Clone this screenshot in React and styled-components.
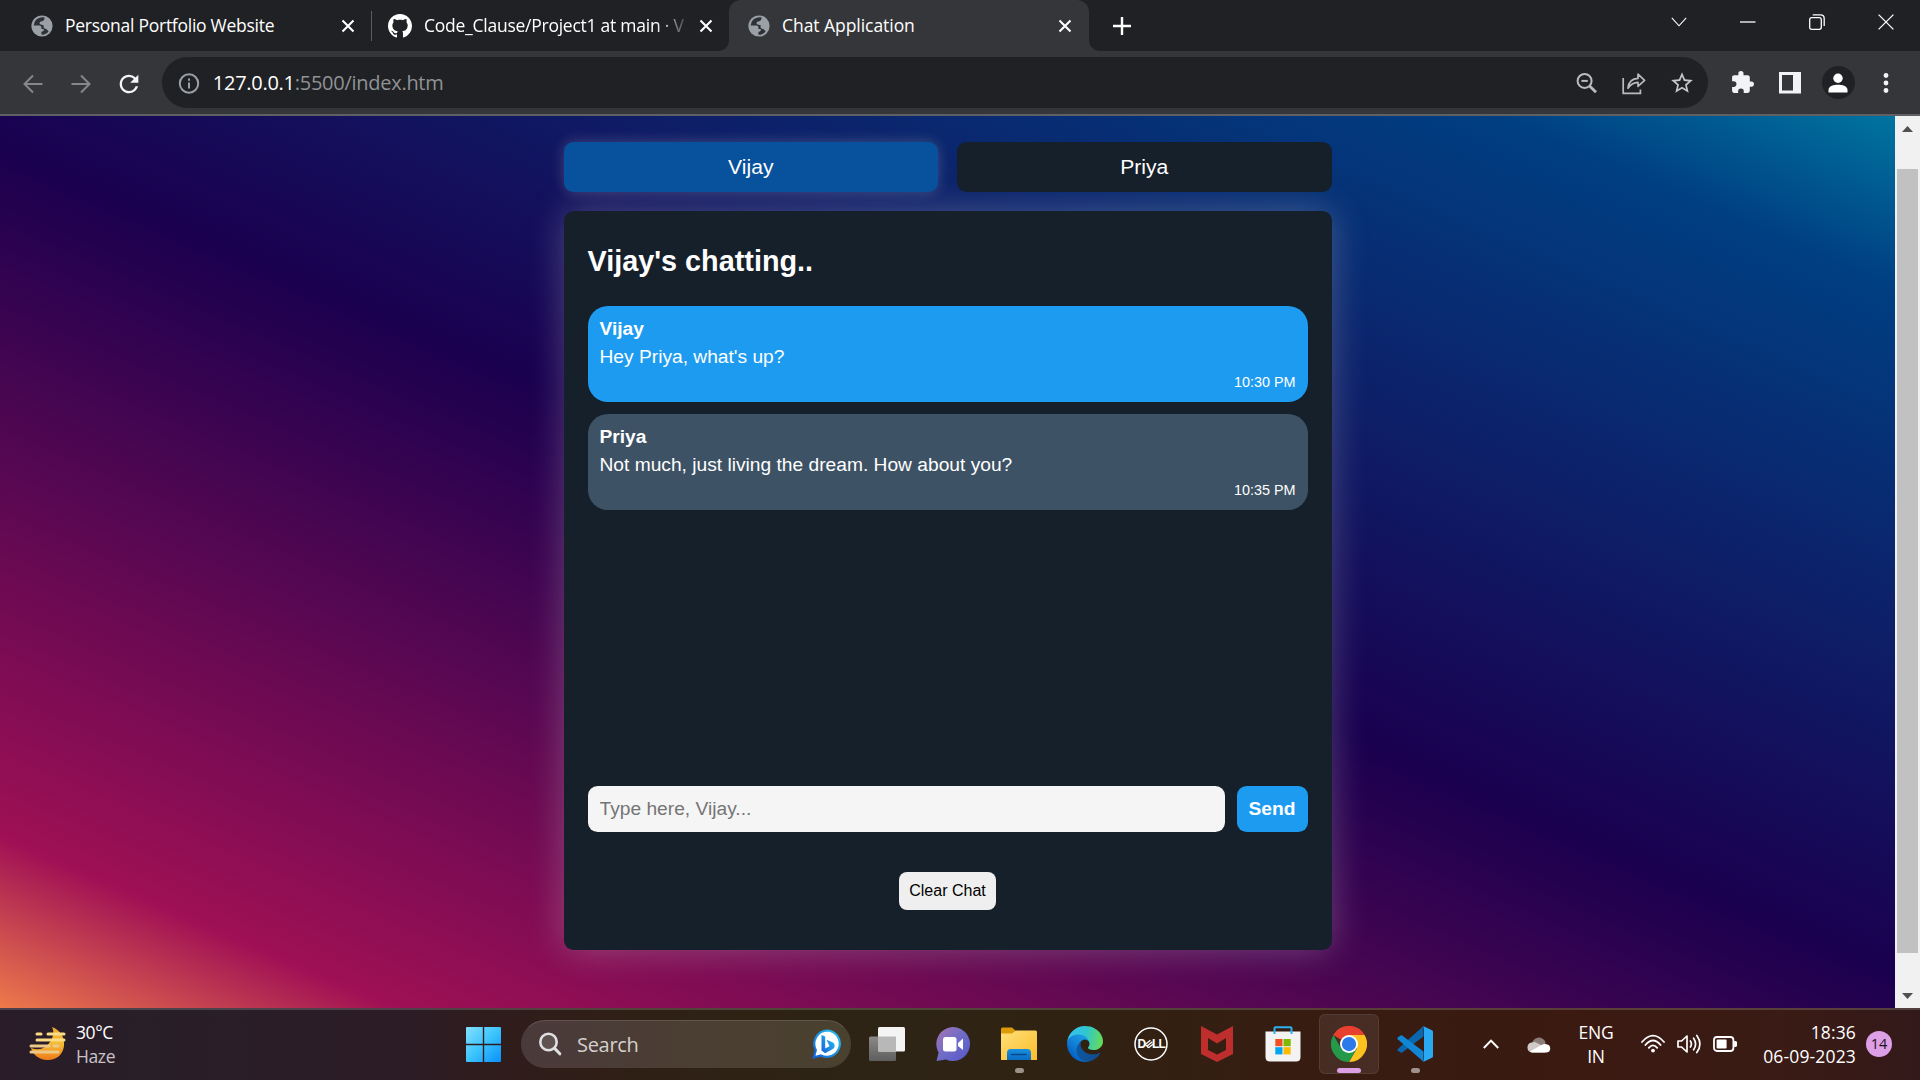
import React from "react";
import styled, { createGlobalStyle } from "styled-components";

const GlobalStyle = createGlobalStyle`
  * { box-sizing: border-box; }
  body { margin: 0; background: #202124; overflow: hidden; }
`;

const ui = `"Open Sans", "Noto Sans", sans-serif`;
const arial = `"Liberation Sans", Arial, sans-serif`;

const Screen = styled.div`
  width: 1920px;
  height: 1080px;
  display: flex;
  flex-direction: column;
  overflow: hidden;
  font-family: ${ui};
`;

/* ---------- browser chrome ---------- */
const TabStrip = styled.div`
  height: 51px;
  background: #202124;
  display: flex;
  align-items: center;
`;
const Tab = styled.div`
  position: relative;
  width: ${(p) => p.$w}px;
  height: 51px;
  padding: 0 ${(p) => p.$pr}px 0 ${(p) => p.$pl}px;
  display: flex;
  align-items: center;
  gap: 12px;
  color: #fff;
  background: ${(p) => (p.$active ? "#35363a" : "transparent")};
  border-radius: 12px 12px 0 0;
  &::before,
  &::after {
    content: "";
    display: ${(p) => (p.$active ? "block" : "none")};
    position: absolute;
    bottom: 0;
    width: 10px;
    height: 10px;
  }
  &::before {
    left: -10px;
    background: radial-gradient(circle at 0 0, transparent 9.5px, #35363a 10px);
  }
  &::after {
    right: -10px;
    background: radial-gradient(circle at 100% 0, transparent 9.5px, #35363a 10px);
  }
`;
const TabTitle = styled.span`
  flex: 1;
  min-width: 0;
  padding-bottom: 1px;
  white-space: nowrap;
  font-size: 17.5px;
  line-height: 26px;
  letter-spacing: ${(p) => p.$ls}px;
  ${(p) =>
    p.$fade &&
    "-webkit-mask-image: linear-gradient(90deg, #000 88%, transparent 102%); mask-image: linear-gradient(90deg, #000 88%, transparent 102%);"}
`;
const TabDivider = styled.div`
  width: 1px;
  height: 30px;
  background: #5a5b5f;
`;
const NewTab = styled.div`
  width: 66px;
  display: flex;
  justify-content: center;
`;
const WindowButtons = styled.div`
  margin-left: auto;
  display: flex;
  height: 43px;
  align-self: flex-start;
`;
const WindowButton = styled.div`
  width: 69px;
  display: flex;
  align-items: center;
  justify-content: center;
`;
const Toolbar = styled.div`
  height: 65px;
  background: #35363a;
  border-bottom: 2px solid #5f6063;
  display: flex;
  align-items: center;
`;
const NavButtons = styled.div`
  width: 162px;
  padding: 2px 0 0 21px;
  display: flex;
  align-items: center;
  gap: 24px;
`;
const Omnibox = styled.div`
  width: 1548px;
  height: 51px;
  border-radius: 26px;
  background: #202124;
  display: flex;
  align-items: center;
  padding: 0 13px 0 16px;
`;
const Url = styled.span`
  margin-left: 13px;
  flex: 1;
  font-size: 20px;
  letter-spacing: -0.27px;
  color: #8f9296;
  b {
    font-weight: 400;
    color: #fff;
  }
`;
const OmniActions = styled.div`
  display: flex;
  align-items: center;
  gap: 23px;
`;
const ToolbarActions = styled.div`
  flex: 1;
  display: flex;
  align-items: center;
  padding-left: 21px;
`;
const ActionSlot = styled.div`
  width: ${(p) => p.$w}px;
  display: flex;
  flex-shrink: 0;
  justify-content: center;
`;
const Avatar = styled.div`
  width: 33px;
  height: 33px;
  flex-shrink: 0;
  border-radius: 50%;
  background: #202124;
  display: flex;
  align-items: center;
  justify-content: center;
`;

/* ---------- page ---------- */
const Viewport = styled.div`
  height: 892px;
  display: flex;
`;
const Page = styled.main`
  width: 1895px;
  padding-top: 26px;
  display: flex;
  flex-direction: column;
  align-items: center;
  font-family: ${arial};
  background: linear-gradient(23.5deg, #ee7a4b 0%, #9f1055 10%, #1a004f 50%, #003f82 90%, #0074a0 100%);
`;
const Column = styled.div`
  width: 768px;
`;
const PersonSelector = styled.div`
  position: relative;
  z-index: 1;
  display: grid;
  grid-template-columns: 1fr 1fr;
  gap: 19px;
  margin-bottom: 19px;
`;
const PersonButton = styled.button`
  height: 50px;
  border: 0;
  border-radius: 9.6px;
  font: 21.12px/24px ${arial};
  color: #fff;
  background: ${(p) => (p.$active ? "#08529d" : "#16202a")};
  box-shadow: ${(p) => (p.$active ? "0 0 14px rgba(225, 225, 225, 0.24)" : "none")};
`;
const ChatPanel = styled.section`
  height: 739px;
  padding: 33px 24px 0;
  border-radius: 9.6px;
  background: #16202a;
  box-shadow: 0 0 36px rgba(225, 225, 225, 0.28);
  color: #fff;
  display: flex;
  flex-direction: column;
`;
const ChatTitle = styled.h2`
  margin: 0;
  height: 62px;
  font-size: 28.8px;
  line-height: 34px;
`;
const Messages = styled.div`
  height: 480px;
  display: flex;
  flex-direction: column;
  gap: 12px;
`;
const Bubble = styled.article`
  height: 96px;
  padding: 9px 12px;
  border-radius: 20px;
  background: ${(p) => (p.$own ? "#1d9bf0" : "#3e5265")};
  display: flex;
  flex-direction: column;
`;
const Sender = styled.strong`
  font-size: 19.2px;
  line-height: 28px;
`;
const Body = styled.span`
  font-size: 19.2px;
  line-height: 28px;
`;
const Time = styled.time`
  align-self: flex-end;
  font-size: 14.4px;
  line-height: 23px;
`;
const Composer = styled.form`
  display: flex;
  gap: 12px;
`;
const Input = styled.input`
  flex: 1;
  min-width: 0;
  height: 46px;
  padding: 0 12px;
  border: 0;
  border-radius: 9.6px;
  background: #f5f5f5;
  font: 19.2px ${arial};
  &::placeholder {
    color: #757575;
  }
`;
const Send = styled.button`
  width: 71px;
  height: 46px;
  padding: 0;
  border: 0;
  border-radius: 9.6px;
  background: #1d9bf0;
  color: #fff;
  font: bold 19.2px ${arial};
`;
const Clear = styled.button`
  align-self: center;
  margin-top: 40px;
  width: 97px;
  height: 38px;
  padding: 0;
  border: 0;
  border-radius: 8px;
  background: #efefef;
  color: #000;
  font: 16px ${arial};
`;
const Scrollbar = styled.div`
  width: 25px;
  background: #f1f1f1;
  display: flex;
  flex-direction: column;
  align-items: center;
  justify-content: space-between;
  padding: 10px 0 9px;
`;
const Thumb = styled.div`
  width: 21px;
  height: 784px;
  margin-bottom: 24px;
  margin-top: 20px;
  background: #c1c1c1;
`;

/* ---------- taskbar ---------- */
const Taskbar = styled.footer`
  height: 72px;
  padding-bottom: 2px;
  border-top: 2px solid rgba(255, 255, 255, 0.16);
  background: linear-gradient(90deg, #291c28 0, #291f28 140px, #2c1c26 400px, #2f1c1c 500px, #2f2015 640px, #2d2415 860px, #302213 1080px, #371c12 1300px, #3a1a11 1560px, #3a1b15 1780px, #33191a 1920px) border-box;
  display: flex;
  align-items: center;
  color: #fff;
`;
const Weather = styled.div`
  width: 466px;
  padding-left: 29px;
  display: flex;
  align-items: center;
  gap: 10px;
`;
const Lines = styled.div`
  display: flex;
  flex-direction: column;
  align-items: ${(p) => p.$align || "flex-start"};
  font-size: 17.5px;
  line-height: 24px;
  letter-spacing: ${(p) => p.$ls || 0}px;
  white-space: nowrap;
`;
const Muted = styled.span`
  color: #c9c3c8;
`;
const SearchBox = styled.div`
  width: 330px;
  height: 48px;
  margin: 0 3px 0 20px;
  padding: 0 8px 0 16px;
  border: 1.5px solid rgba(255, 255, 255, 0.14);
  border-top-color: rgba(255, 255, 255, 0.24);
  border-radius: 24px;
  background: linear-gradient(90deg, #4a3a3b, #4b3e33 50%, #4a412f);
  background-clip: padding-box;
  display: flex;
  align-items: center;
`;
const SearchText = styled.span`
  flex: 1;
  margin-left: 15px;
  font-size: 20px;
  letter-spacing: -0.3px;
  color: #d5d0ce;
`;
const App66 = styled.div`
  position: relative;
  width: 66px;
  height: 68px;
  display: flex;
  align-items: center;
  justify-content: center;
`;
const ActiveTile = styled.div`
  width: 60px;
  height: 60px;
  border-radius: 6px;
  background: rgba(255, 255, 255, 0.08);
  border: 1px solid rgba(255, 255, 255, 0.08);
  display: flex;
  align-items: center;
  justify-content: center;
`;
const Indicator = styled.div`
  position: absolute;
  top: 58px;
  left: calc(50% - ${(p) => p.$w / 2}px);
  width: ${(p) => p.$w}px;
  height: 5px;
  border-radius: 3px;
  background: ${(p) => p.$c};
`;
const Tray = styled.div`
  flex: 1;
  display: flex;
  align-items: center;
  padding-left: 35px;
`;
const TrayIcons = styled.div`
  display: flex;
  gap: 12px;
  margin-left: 28px;
`;
const Clock = styled.div`
  flex: 1;
  display: flex;
  justify-content: flex-end;
`;
const Badge = styled.div`
  width: 26px;
  height: 26px;
  margin: 0 28px 0 10px;
  border-radius: 50%;
  background: #dd9fe5;
  color: #1d1220;
  font-size: 14.5px;
  line-height: 25px;
  text-align: center;
`;

/* ---------- icons ---------- */
const Globe = () => (
  <svg width="22" height="22" viewBox="0 0 22 22">
    <circle cx="11" cy="11" r="10.6" fill="#9aa0a6" />
    <path d="M13.6 2.6 C11 1.8 6 3 3.8 6.6 L2.6 10.6 L8.5 10.6 C10.5 10.8 10.6 12.4 10.4 14 L12.6 14 C13.4 15.8 12 16.6 10.4 16.8 L10.4 19.6 C13 20 16 18.6 17.6 16.8 C16.8 14.8 15 13.6 13.6 13.4 C12.2 13 12.4 11.4 13 10.6 L9 9.2 C8 8 8.8 6.8 10 6.6 C12 6.6 13.6 5.4 13.6 2.6 Z" fill="#303134" />
  </svg>
);
const Github = () => (
  <svg width="24" height="24" viewBox="0 0 16 16" fill="#fff">
    <path d="M8 0C3.58 0 0 3.58 0 8c0 3.54 2.29 6.53 5.47 7.59.4.07.55-.17.55-.38 0-.19-.01-.82-.01-1.49-2.01.37-2.53-.49-2.69-.94-.09-.23-.48-.94-.82-1.13-.28-.15-.68-.52-.01-.53.63-.01 1.08.58 1.23.82.72 1.21 1.87.87 2.33.66.07-.52.28-.87.51-1.07-1.78-.2-3.64-.89-3.64-3.95 0-.87.31-1.59.82-2.15-.08-.2-.36-1.02.08-2.12 0 0 .67-.21 2.2.82.64-.18 1.32-.27 2-.27s1.36.09 2 .27c1.53-1.04 2.2-.82 2.2-.82.44 1.1.16 1.92.08 2.12.51.56.82 1.27.82 2.15 0 3.07-1.87 3.75-3.65 3.95.29.25.54.73.54 1.48 0 1.07-.01 1.93-.01 2.2 0 .21.15.46.55.38A8.01 8.01 0 0 0 16 8c0-4.42-3.58-8-8-8z" />
  </svg>
);
const CloseX = () => (
  <svg width="14" height="14" viewBox="0 0 14 14" stroke="#fff" strokeWidth="2.1">
    <path d="M1.5 1.5 L12.5 12.5 M12.5 1.5 L1.5 12.5" />
  </svg>
);
const Plus = () => (
  <svg width="18" height="18" viewBox="0 0 18 18" stroke="#fff" strokeWidth="2.4">
    <path d="M9 0 V18 M0 9 H18" />
  </svg>
);
const Arrow = ({ flip }) => (
  <svg width="24" height="24" viewBox="0 0 24 24" fill="none" stroke="#86878b" strokeWidth="2" transform={flip ? "scale(-1 1)" : undefined}>
    <path d="M21.5 12 H3.5 M12 3.500 L3.500 12 L12 20.500" />
  </svg>
);
const Reload = () => (
  <svg width="28" height="28" viewBox="0 0 24 24" fill="#f4f5f6" style={{ marginLeft: -2 }}>
    <path d="M17.65 6.35A7.96 7.96 0 0 0 12 4c-4.42 0-7.99 3.58-7.99 8s3.57 8 7.99 8c3.73 0 6.84-2.55 7.73-6h-2.08A5.99 5.99 0 0 1 12 18c-3.31 0-6-2.69-6-6s2.69-6 6-6c1.66 0 3.14.69 4.22 1.78L13 11h7V4l-2.35 2.35z" />
  </svg>
);
const Info = () => (
  <svg width="22" height="22" viewBox="0 0 22 22" fill="none" stroke="#9aa0a6" strokeWidth="2">
    <circle cx="11" cy="11.500" r="9.2" />
    <path d="M11 10.500 V16.500 M11 6.500 V8.700" />
  </svg>
);
const ZoomOut = () => (
  <svg width="24" height="24" viewBox="0 0 24 24" fill="none" stroke="#b9bbbf" strokeWidth="2">
    <circle cx="9.6" cy="9.9" r="7" />
    <path d="M6.4 9.9 H12.8" />
    <path d="M14.6 14.9 L21 21.3" strokeWidth="2.8" />
  </svg>
);
const Share = () => (
  <svg width="24" height="24" viewBox="0 0 24 24" fill="none" stroke="#b9bbbf" strokeWidth="1.7">
    <path d="M1.2 7 V22.3 H18.4 V18.6" />
    <path d="M6 17.2 C6.6 10.6 10 7.6 16 7.4 V3.2 L22.6 9.4 L16 15.4 V11.4 C11.4 11.6 8.6 13.2 6 17.2 Z" strokeLinejoin="round" />
  </svg>
);
const Star = () => (
  <svg width="26" height="26" viewBox="0 0 24 24" fill="#c4c6c9">
    <path d="M22 9.24l-7.19-.62L12 2 9.19 8.63 2 9.24l5.46 4.73L5.82 21 12 17.27 18.18 21l-1.63-7.03L22 9.24zM12 15.4l-3.76 2.27 1-4.28-3.32-2.88 4.38-.38L12 6.1l1.71 4.04 4.38.38-3.32 2.88 1 4.28L12 15.4z" />
  </svg>
);
const Puzzle = () => (
  <svg width="25" height="25" viewBox="0 0 24 24" fill="#f1f3f4">
    <path d="M20.5 11H19V7a2 2 0 0 0-2-2h-4V3.5a2.5 2.5 0 0 0-5 0V5H4c-1.1 0-1.99.9-1.99 2v3.8H3.5a2.7 2.7 0 0 1 0 5.4H2V20c0 1.1.9 2 2 2h3.8v-1.5a2.7 2.7 0 0 1 5.4 0V22H17a2 2 0 0 0 2-2v-4h1.500a2.500 2.500 0 0 0 0-5z" />
  </svg>
);
const SidePanel = () => (
  <svg width="22" height="22" viewBox="0 0 22 22">
    <path fillRule="evenodd" d="M0 0 H22 V21.500 H0 Z M3 3 V18.500 H14 V3 Z" fill="#f1f3f4" />
  </svg>
);
const Person = () => (
  <svg width="20" height="20" viewBox="0 0 20 20" fill="#fff">
    <circle cx="10" cy="5.200" r="4.700" />
    <path d="M.5 19.500 V17 C.5 13 6 11.800 10 11.800 S19.500 13 19.500 17 V19.500 Z" />
  </svg>
);
const Dots = () => (
  <svg width="6" height="22" viewBox="0 0 6 22" fill="#f1f3f4">
    <circle cx="3" cy="3.500" r="2.400" />
    <circle cx="3" cy="11" r="2.400" />
    <circle cx="3" cy="18.500" r="2.400" />
  </svg>
);
const Glyph = ({ d, w = 16, h = 16, sw = 1.3 }) => (
  <svg width={w} height={h} viewBox={`0 0 ${w} ${h}`} fill="none" stroke="#fff" strokeWidth={sw}>
    <path d={d} />
  </svg>
);
const Triangle = ({ down }) => (
  <svg width="11" height="6" viewBox="0 0 11 6" fill="#505050">
    <path d={down ? "M0 0 H11 L5.500 6 Z" : "M0 6 H11 L5.500 0 Z"} />
  </svg>
);

const WeatherIcon = () => (
  <svg width="37" height="36" viewBox="0 0 37 36">
    <defs>
      <linearGradient id="moon" x1="0" y1="0" x2="0" y2="1">
        <stop offset="0" stopColor="#f0a92f" />
        <stop offset=".5" stopColor="#f4bd35" />
        <stop offset="1" stopColor="#ee7a1a" />
      </linearGradient>
    </defs>
    <path d="M23 1 C31 4 36 11 35 20 C34 29 27 34.500 18 34 C10 33.600 4 29 2 22 C11 25 17 22 21 16 C25 10 25 5 23 1 Z" fill="url(#moon)" />
    <g stroke="#fbdc86" strokeWidth="3" strokeLinecap="round">
      <path d="M8 8 H12 M19 8 H35 M8 14 H35" />
      <path d="M2 20 H20 M25 20 H29 M2 26 H29" stroke="#ecca86" />
    </g>
  </svg>
);
const WindowsLogo = () => (
  <svg width="35" height="35" viewBox="0 0 35 35">
    <defs>
      <linearGradient id="win" gradientUnits="userSpaceOnUse" x1="0" y1="0" x2="35" y2="35">
        <stop offset="0" stopColor="#85dfff" />
        <stop offset=".5" stopColor="#3cc4fc" />
        <stop offset="1" stopColor="#0890fb" />
      </linearGradient>
    </defs>
    <path d="M1 0 H16.800 V16.800 H0 V1 Q0 0 1 0 M18.200 0 H34 Q35 0 35 1 V16.800 H18.200 Z M0 18.200 H16.800 V35 H1 Q0 35 0 34 Z M18.200 18.200 H35 V34 Q35 35 34 35 H18.200 Z" fill="url(#win)" />
  </svg>
);
const SearchIcon = () => (
  <svg width="24" height="24" viewBox="0 0 24 24" fill="none" stroke="#dfe0e3" strokeLinecap="round">
    <circle cx="10.500" cy="10" r="8.200" strokeWidth="2.600" fill="rgba(255,255,255,.12)" />
    <path d="M16.600 16.400 L21.800 21.800" strokeWidth="3" />
  </svg>
);
const Bing = () => (
  <svg width="30" height="30" viewBox="0 0 30 30">
    <defs>
      <linearGradient id="bg" x1="1" y1="0" x2="0" y2="1">
        <stop offset="0" stopColor="#27c6f4" />
        <stop offset="1" stopColor="#1560d8" />
      </linearGradient>
    </defs>
    <path d="M15.500 1.500 A13 13.200 0 1 1 9 26.500 L1.800 28.400 L3.800 21 A13.400 13.400 0 0 1 15.500 1.500 Z" fill="#fff" stroke="url(#bg)" strokeWidth="2.200" />
    <path d="M9.500 6 L13.200 7.400 V19.500 L17.500 17.200 L15.800 13.500 L14.500 10.800 L21 13.400 C23.500 15 23 18.600 20.800 20 L13.200 24.200 L9.500 21.600 Z" fill="url(#bg)" />
  </svg>
);
const TaskView = () => (
  <svg width="36" height="34" viewBox="0 0 36 34">
    <defs>
      <linearGradient id="tv" x1="0" y1="0" x2="0" y2="1">
        <stop offset="0" stopColor="#8a8987" />
        <stop offset="1" stopColor="#5f5f5f" />
      </linearGradient>
    </defs>
    <rect x="0" y="9.500" width="27" height="24.500" rx="1.500" fill="url(#tv)" />
    <rect x="9" y="0" width="27" height="24.500" rx="1.500" fill="#f4f4f4" />
    <rect x="9" y="9.500" width="18" height="15" fill="#b9b8b8" />
  </svg>
);
const Meet = () => (
  <svg width="36" height="36" viewBox="0 0 36 36">
    <defs>
      <linearGradient id="mt" x1="0" y1="0" x2="1" y2="1">
        <stop offset="0" stopColor="#a874b2" />
        <stop offset=".5" stopColor="#6f6cc8" />
        <stop offset="1" stopColor="#5657c9" />
      </linearGradient>
    </defs>
    <path d="M18 1 A17 17 0 1 1 11 33.500 L1.500 35 L3.600 26.500 A17 17 0 0 1 18 1 Z" fill="url(#mt)" />
    <rect x="8" y="11" width="13.500" height="14.500" rx="2.500" fill="#fff" />
    <path d="M23 17 L28 12.500 V24 L23 20 Z" fill="#fff" />
  </svg>
);
const Explorer = () => (
  <svg width="36" height="34" viewBox="0 0 36 34">
    <defs>
      <linearGradient id="fd" x1="0" y1="0" x2="1" y2="1">
        <stop offset="0" stopColor="#ffe07a" />
        <stop offset="1" stopColor="#fbbc2a" />
      </linearGradient>
      <linearGradient id="fb" x1="0" y1="0" x2="0" y2="1">
        <stop offset="0" stopColor="#1a90de" />
        <stop offset="1" stopColor="#0a6cc4" />
      </linearGradient>
    </defs>
    <path d="M0 2 Q0 .5 1.500 .5 H11 L15 4 V9 H0 Z" fill="#dd9b0a" />
    <path d="M0 6.500 H11 L15 3.500 H34.500 Q36 3.500 36 5 V33 H0 Z" fill="url(#fd)" />
    <path d="M6 33 V26 Q6 22 10 22 H26 Q30 22 30 26 V33 Z" fill="url(#fb)" />
    <path d="M10.500 27.500 H25" stroke="#09488c" strokeWidth="1.600" strokeLinecap="round" />
  </svg>
);
const Edge = () => (
  <svg width="36" height="36" viewBox="0 0 256 256">
    <defs>
      <linearGradient id="e1" x1="58" y1="177" x2="236" y2="177" gradientUnits="userSpaceOnUse">
        <stop offset="0" stopColor="#0c59a4" />
        <stop offset="1" stopColor="#114a8b" />
      </linearGradient>
      <linearGradient id="e2" x1="152" y1="100" x2="46" y2="216" gradientUnits="userSpaceOnUse">
        <stop offset="0" stopColor="#1b9de2" />
        <stop offset=".5" stopColor="#1383d9" />
        <stop offset="1" stopColor="#0563c4" />
      </linearGradient>
      <linearGradient id="e3" x1="10" y1="60" x2="250" y2="110" gradientUnits="userSpaceOnUse">
        <stop offset="0" stopColor="#35c1f1" />
        <stop offset=".5" stopColor="#2fc7cf" />
        <stop offset="1" stopColor="#66db57" />
      </linearGradient>
    </defs>
    <path d="M231 190.500a95 95 0 0 1-10.500 4.700 101.900 101.900 0 0 1-35.900 6.400c-47.300 0-88.500-32.500-88.500-74.300a31.500 31.500 0 0 1 16.400-27.300c-42.800 1.800-53.800 46.400-53.800 72.500 0 74 68.100 81.400 82.800 81.400 7.900 0 19.800-2.300 27-4.600l1.300-.4a128.300 128.300 0 0 0 66.600-52.800 4 4 0 0 0-5.400-5.600z" fill="url(#e1)" />
    <path d="M105.700 241.400a79.200 79.200 0 0 1-22.700-21.300 80.700 80.700 0 0 1 29.500-120c3.200-1.500 8.500-4.100 15.600-4a32.400 32.400 0 0 1 25.700 13 31.900 31.900 0 0 1 6.300 18.700c0-.2 24.500-79.600-80-79.600C36.200 48.200 0 90 0 126.200a130.500 130.500 0 0 0 12.200 56 128 128 0 0 0 156.300 67 75.500 75.500 0 0 1-62.800-7.800z" fill="url(#e2)" />
    <path d="M152.300 148.900c-.8 1-3.300 2.500-3.300 5.700 0 2.600 1.700 5.100 4.700 7.200 14.300 10 41.400 8.600 41.500 8.600a59.600 59.600 0 0 0 30.300-8.300 61.400 61.400 0 0 0 30.400-52.900c.3-22.400-8-37.300-11.300-43.900C223.500 23.900 177.700 0 128 0A128 128 0 0 0 0 126.200c.5-36.500 36.800-66 80-66 3.500 0 23.500.3 42 10a72.600 72.600 0 0 1 30.900 29.300c6.100 10.600 7.200 24.100 7.200 29.500s-2.700 13.300-7.800 19.900z" fill="url(#e3)" />
  </svg>
);
const DellText = styled.text`
  font: bold 12px ${arial};
  letter-spacing: -0.8px;
`;
const Dell = () => (
  <svg width="36" height="36" viewBox="0 0 36 36">
    <circle cx="18" cy="18" r="16" fill="none" stroke="#fff" strokeWidth="1.500" />
    <DellText x="4.600" y="22.300" fill="#fff">D</DellText>
    <DellText x="18.900" y="22.300" fill="#fff">LL</DellText>
    <path d="M12.200 18.400 L17.400 14.200 M13.800 20.200 L19.400 15.800 M15.600 21.800 L20.200 18 M12.200 18.400 L15.600 21.800" fill="none" stroke="#fff" strokeWidth="1.300" />
  </svg>
);
const McAfee = () => (
  <svg width="32" height="36" viewBox="0 0 32 36">
    <path d="M0 0 L16 8.500 L32 0 V28 L16 36 L0 28 Z M7 12 V24 L16 28.500 L25 24 V12 L16 17.500 Z" fill="#be2e2d" fillRule="evenodd" />
  </svg>
);
const Store = () => (
  <svg width="36" height="36" viewBox="0 0 36 36">
    <path d="M.5 5.500 H35.500 V31 Q35.500 35.500 31 35.500 H5 Q.5 35.500 .5 31 Z" fill="#f3f3f3" />
    <path d="M9.500 8 V2 Q9.500 1.200 10.500 1.200 H25.500 Q26.500 1.200 26.500 2 V8" fill="none" stroke="#2bb2ee" strokeWidth="2" />
    <rect x="10.300" y="13" width="7.200" height="7.200" fill="#f25022" />
    <rect x="18.500" y="13" width="7.200" height="7.200" fill="#7fba00" />
    <rect x="10.300" y="21.200" width="7.200" height="7.200" fill="#00a4ef" />
    <rect x="18.500" y="21.200" width="7.200" height="7.200" fill="#ffb900" />
  </svg>
);
const Chrome = () => (
  <svg width="36" height="36" viewBox="0 0 48 48">
    <path d="M24 24 L3.200 12 A24 24 0 0 1 44.800 12 Z" fill="#e8402f" />
    <path d="M24 12 H44.800 A24 24 0 0 1 24 48 L34.400 30 Z" fill="#fcc31e" />
    <path d="M34.400 30 L24 48 A24 24 0 0 1 3.200 12 L13.600 30 Q24 38 34.400 30 Z" fill="#24994a" />
    <path d="M3.200 12 A24 24 0 0 1 44.800 12 H24 L13.600 18 Z" fill="#e8402f" />
    <circle cx="24" cy="24" r="12" fill="#fff" />
    <circle cx="24" cy="24" r="9.500" fill="#2b79ea" />
  </svg>
);
const VSCode = () => (
  <svg width="36" height="36" viewBox="0 0 36 36">
    <path d="M26.500 .5 L26.500 10.500 L4.500 27 L.8 24.800 Q0 24 .8 23 L26.500 0 Z" fill="#0a66ad" />
    <path d="M26.500 35.800 V25.500 L4.500 9 L.8 11.200 Q0 12.200 .8 13.200 Z" fill="#1186d4" />
    <path d="M26 0 L35 4.200 Q36 4.800 36 5.800 V30.200 Q36 31.200 35 31.800 L26 36 Q27 35 27 33 V3 Q27 1 26 0 Z" fill="#29a9f2" />
  </svg>
);
const Cloud = () => (
  <svg width="24" height="17" viewBox="0 0 24 17">
    <path d="M5 9 A7 7 0 0 1 18.500 6 L18 12 H5 Z" fill="#8b7d79" />
    <path d="M5 16.500 A5 5 0 0 1 4.600 6.600 A6 6 0 0 1 11 7.500 L20 12 L18 16.500 Z" fill="#d0cac8" />
    <path d="M3 15.500 L14.500 9 A5.500 5.500 0 0 1 19.500 8.200 A4.200 4.200 0 0 1 19.800 16.500 H5.500 Q4 16.500 3 15.500 Z" fill="#fff" />
  </svg>
);
const Wifi = () => (
  <svg width="24" height="20" viewBox="0 0 24 20" fill="none" stroke="#fff" strokeWidth="1.800" strokeLinecap="round">
    <path d="M1 8 Q12 -4.600 23 8 M4.400 11 Q12 2 19.600 11 M7.800 13.800 Q12 8.800 16.200 13.800" />
    <circle cx="12" cy="16.600" r="1.900" fill="#fff" stroke="none" />
  </svg>
);
const Sound = () => (
  <svg width="24" height="20" viewBox="0 0 24 20" fill="none" stroke="#fff" strokeWidth="1.700" strokeLinecap="round" strokeLinejoin="round">
    <path d="M1 7 H4.600 L10 2 V18 L4.600 13 H1 Z M13.400 7 Q15.400 10 13.400 13 M16.600 4.200 Q20.600 10 16.600 15.800 M19.800 1.400 Q26 10 19.800 18.600" />
  </svg>
);
const Battery = () => (
  <svg width="24" height="20" viewBox="0 0 24 20" fill="none" stroke="#fff" strokeWidth="1.800">
    <rect x="1" y="3" width="19.400" height="14" rx="3" />
    <rect x="3.600" y="5.600" width="10" height="8.800" rx="1" fill="#fff" stroke="none" />
    <path d="M22 8 Q23.500 8 23.500 10 Q23.500 12 22 12 Z" fill="#fff" />
  </svg>
);

const messages = [
  { who: "Vijay", text: "Hey Priya, what's up?", time: "10:30 PM", own: true },
  { who: "Priya", text: "Not much, just living the dream. How about you?", time: "10:35 PM", own: false },
];

export default function App() {
  return (
    <Screen>
      <GlobalStyle />
      <TabStrip>
        <Tab $w={371} $pl={31} $pr={16}>
          <Globe />
          <TabTitle $ls={-0.26}>Personal Portfolio Website</TabTitle>
          <CloseX />
        </Tab>
        <TabDivider />
        <Tab $w={357} $pl={16} $pr={16}>
          <Github />
          <TabTitle $ls={-0.25} $fade>Code_Clause/Project1 at main · V</TabTitle>
          <CloseX />
        </Tab>
        <Tab $active $w={360} $pl={19} $pr={17}>
          <Globe />
          <TabTitle $ls={-0.05}>Chat Application</TabTitle>
          <CloseX />
        </Tab>
        <NewTab><Plus /></NewTab>
        <WindowButtons>
          <WindowButton><Glyph w={16} h={10} d="M.8 .8 L8 8.800 L15.200 .8" sw={1.1} /></WindowButton>
          <WindowButton><Glyph w={16} h={16} d="M0 8 H15.500" /></WindowButton>
          <WindowButton><Glyph w={16} h={16} d="M2.700 3.700 H10.300 Q12.300 3.700 12.300 5.700 V13.300 Q12.300 15.300 10.300 15.300 H2.700 Q.7 15.300 .7 13.300 V5.700 Q.7 3.700 2.700 3.700 M3.700 .8 H11.500 Q15.200 .8 15.200 4.500 V12" /></WindowButton>
          <WindowButton><Glyph w={16} h={16} d="M.6 .6 L15.400 15.400 M15.400 .6 L.6 15.400" /></WindowButton>
        </WindowButtons>
      </TabStrip>
      <Toolbar>
        <NavButtons>
          <Arrow />
          <Arrow flip />
          <Reload />
        </NavButtons>
        <Omnibox>
          <Info />
          <Url><b>127.0.0.1</b>:5500/index.htm</Url>
          <OmniActions>
            <ZoomOut />
            <Share />
            <Star />
          </OmniActions>
        </Omnibox>
        <ToolbarActions>
          <ActionSlot $w={26}><Puzzle /></ActionSlot>
          <ActionSlot $w={69}><SidePanel /></ActionSlot>
          <ActionSlot $w={28}><Avatar><Person /></Avatar></ActionSlot>
          <ActionSlot $w={68}><Dots /></ActionSlot>
        </ToolbarActions>
      </Toolbar>

      <Viewport>
        <Page>
          <Column>
            <PersonSelector>
              <PersonButton $active>Vijay</PersonButton>
              <PersonButton>Priya</PersonButton>
            </PersonSelector>
            <ChatPanel>
              <ChatTitle>Vijay's chatting..</ChatTitle>
              <Messages>
                {messages.map((m) => (
                  <Bubble key={m.time} $own={m.own}>
                    <Sender>{m.who}</Sender>
                    <Body>{m.text}</Body>
                    <Time>{m.time}</Time>
                  </Bubble>
                ))}
              </Messages>
              <Composer>
                <Input placeholder="Type here, Vijay..." />
                <Send type="button">Send</Send>
              </Composer>
              <Clear>Clear Chat</Clear>
            </ChatPanel>
          </Column>
        </Page>
        <Scrollbar>
          <Triangle />
          <Thumb />
          <Triangle down />
        </Scrollbar>
      </Viewport>

      <Taskbar>
        <Weather>
          <WeatherIcon />
          <Lines $ls={-0.4}>
            <span>30°C</span>
            <Muted>Haze</Muted>
          </Lines>
        </Weather>
        <WindowsLogo />
        <SearchBox>
          <SearchIcon />
          <SearchText>Search</SearchText>
          <Bing />
        </SearchBox>
        <App66><TaskView /></App66>
        <App66><Meet /></App66>
        <App66><Explorer /><Indicator $w={9} $c="#9c9388" /></App66>
        <App66><Edge /></App66>
        <App66><Dell /></App66>
        <App66><McAfee /></App66>
        <App66><Store /></App66>
        <App66><ActiveTile><Chrome /></ActiveTile><Indicator $w={24} $c="#dd9fe5" /></App66>
        <App66><VSCode /><Indicator $w={9} $c="#9f918d" /></App66>
        <Tray>
          <ActionSlot $w={16}><Glyph w={16} h={10} sw={2} d="M.8 9 L8 1.600 L15.200 9" /></ActionSlot>
          <ActionSlot $w={80}><Cloud /></ActionSlot>
          <ActionSlot $w={34}>
            <Lines $align="center" $ls={-0.2}>
              <span>ENG</span>
              <span>IN</span>
            </Lines>
          </ActionSlot>
          <TrayIcons>
            <Wifi />
            <Sound />
            <Battery />
          </TrayIcons>
          <Clock>
            <Lines $align="flex-end" $ls={0.15}>
              <span>18:36</span>
              <span>06-09-2023</span>
            </Lines>
          </Clock>
          <Badge>14</Badge>
        </Tray>
      </Taskbar>
    </Screen>
  );
}
